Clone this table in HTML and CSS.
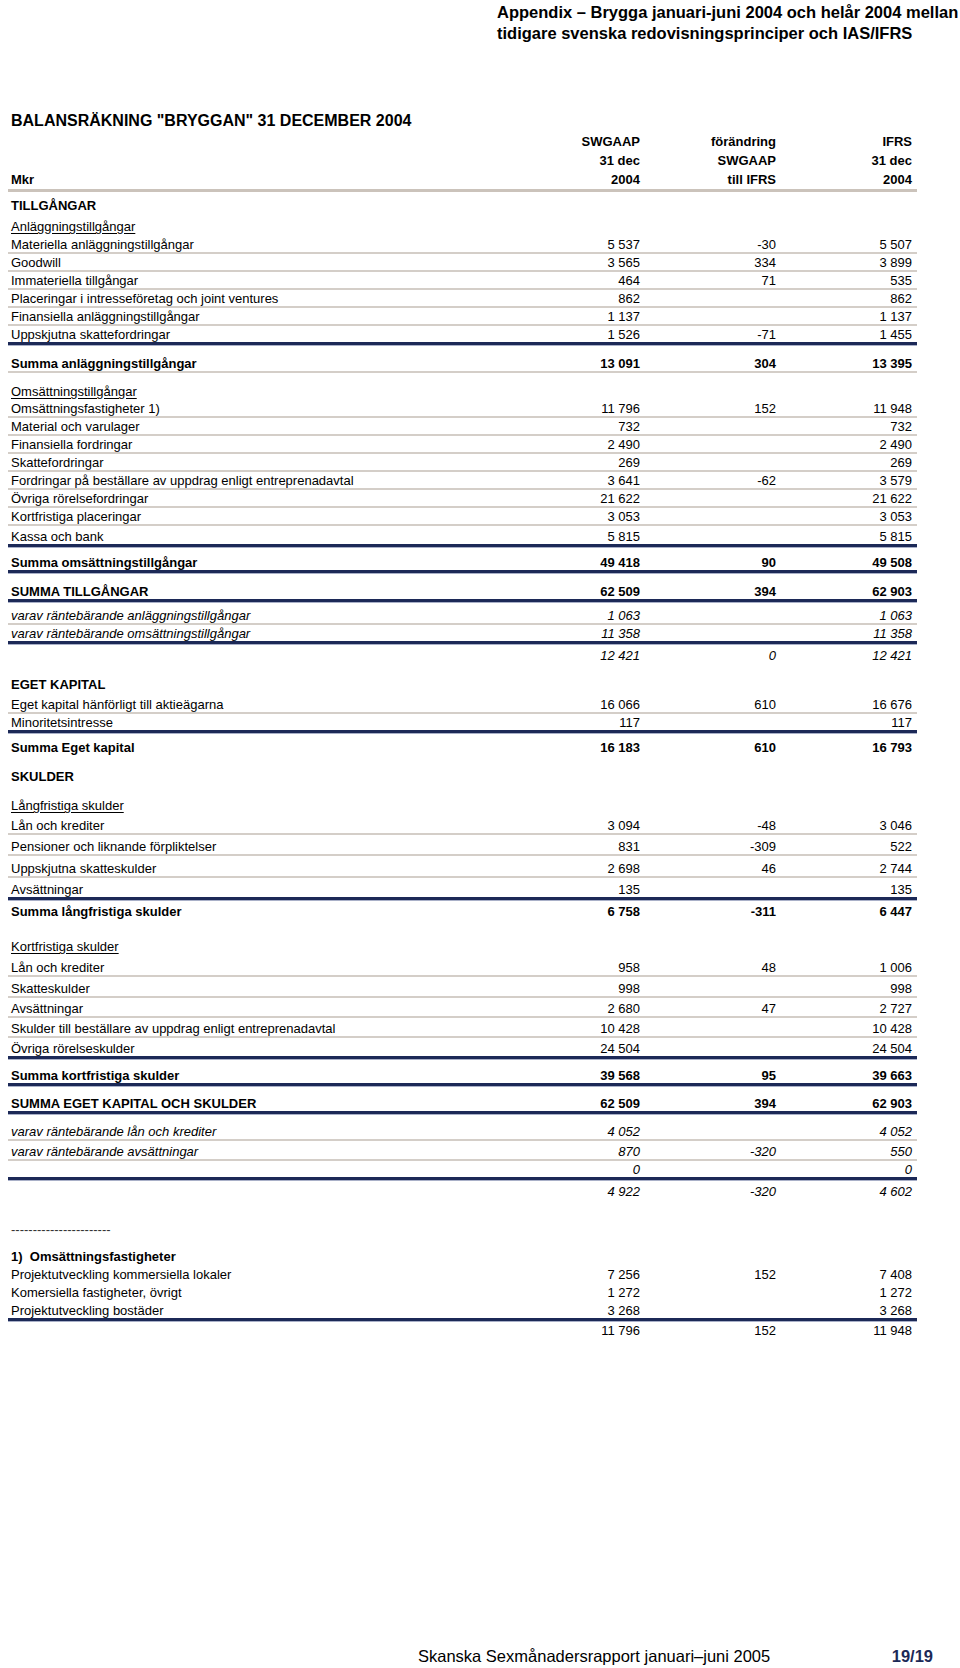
FILE: index.html
```html
<!DOCTYPE html>
<html lang="sv">
<head>
<meta charset="utf-8">
<title>Balansräkning Bryggan 31 december 2004</title>
<link rel="stylesheet" href="styles.css">
</head>
<body>
<div class="page">
  <header class="doc-head">
    <div>Appendix – Brygga januari-juni 2004 och helår 2004 mellan</div>
    <div>tidigare svenska redovisningsprinciper och IAS/IFRS</div>
  </header>

  <h1 class="sheet-title">BALANSRÄKNING "BRYGGAN" 31 DECEMBER 2004</h1>

  <section class="sheet">
    <div class="row hdr first"><span></span><span class="num">SWGAAP</span><span class="num">förändring</span><span class="num">IFRS</span></div>
    <div class="row hdr"><span></span><span class="num">31 dec</span><span class="num">SWGAAP</span><span class="num">31 dec</span></div>
    <div class="row hdr last"><span>Mkr</span><span class="num">2004</span><span class="num">till IFRS</span><span class="num">2004</span></div>

    <div class="row b pt-6"><span>TILLGÅNGAR</span></div>
    <div class="row pt-6"><span class="u">Anläggningstillgångar</span></div>
    <div class="row line pt-3"><span>Materiella anläggningstillgångar</span><span class="num">5 537</span><span class="num">-30</span><span class="num">5 507</span></div>
    <div class="row line"><span>Goodwill</span><span class="num">3 565</span><span class="num">334</span><span class="num">3 899</span></div>
    <div class="row line"><span>Immateriella tillgångar</span><span class="num">464</span><span class="num">71</span><span class="num">535</span></div>
    <div class="row line"><span>Placeringar i intresseföretag och joint ventures</span><span class="num">862</span><span class="num"></span><span class="num">862</span></div>
    <div class="row line"><span>Finansiella anläggningstillgångar</span><span class="num">1 137</span><span class="num"></span><span class="num">1 137</span></div>
    <div class="row rule"><span>Uppskjutna skattefordringar</span><span class="num">1 526</span><span class="num">-71</span><span class="num">1 455</span></div>
    <div class="row b line pt-11"><span>Summa anläggningstillgångar</span><span class="num">13 091</span><span class="num">304</span><span class="num">13 395</span></div>

    <div class="row pt-11"><span class="u">Omsättningstillgångar</span></div>
    <div class="row line pt-2"><span>Omsättningsfastigheter 1)</span><span class="num">11 796</span><span class="num">152</span><span class="num">11 948</span></div>
    <div class="row line"><span>Material och varulager</span><span class="num">732</span><span class="num"></span><span class="num">732</span></div>
    <div class="row line"><span>Finansiella fordringar</span><span class="num">2 490</span><span class="num"></span><span class="num">2 490</span></div>
    <div class="row line"><span>Skattefordringar</span><span class="num">269</span><span class="num"></span><span class="num">269</span></div>
    <div class="row line"><span>Fordringar på beställare av uppdrag enligt entreprenadavtal</span><span class="num">3 641</span><span class="num">-62</span><span class="num">3 579</span></div>
    <div class="row line"><span>Övriga rörelsefordringar</span><span class="num">21 622</span><span class="num"></span><span class="num">21 622</span></div>
    <div class="row line"><span>Kortfristiga placeringar</span><span class="num">3 053</span><span class="num"></span><span class="num">3 053</span></div>
    <div class="row rule pt-3"><span>Kassa och bank</span><span class="num">5 815</span><span class="num"></span><span class="num">5 815</span></div>
    <div class="row b rule pt-8"><span>Summa omsättningstillgångar</span><span class="num">49 418</span><span class="num">90</span><span class="num">49 508</span></div>
    <div class="row b rule pt-11"><span>SUMMA TILLGÅNGAR</span><span class="num">62 509</span><span class="num">394</span><span class="num">62 903</span></div>

    <div class="row i line pt-6"><span>varav räntebärande anläggningstillgångar</span><span class="num">1 063</span><span class="num"></span><span class="num">1 063</span></div>
    <div class="row i rule"><span>varav räntebärande omsättningstillgångar</span><span class="num">11 358</span><span class="num"></span><span class="num">11 358</span></div>
    <div class="row i pt-4"><span></span><span class="num">12 421</span><span class="num">0</span><span class="num">12 421</span></div>

    <div class="row b pt-14"><span>EGET KAPITAL</span></div>
    <div class="row line pt-5"><span>Eget kapital hänförligt till aktieägarna</span><span class="num">16 066</span><span class="num">610</span><span class="num">16 676</span></div>
    <div class="row rule"><span>Minoritetsintresse</span><span class="num">117</span><span class="num"></span><span class="num">117</span></div>
    <div class="row b pt-7"><span>Summa Eget kapital</span><span class="num">16 183</span><span class="num">610</span><span class="num">16 793</span></div>

    <div class="row b pt-14"><span>SKULDER</span></div>
    <div class="row pt-14"><span class="u">Långfristiga skulder</span></div>
    <div class="row line pt-5"><span>Lån och krediter</span><span class="num">3 094</span><span class="num">-48</span><span class="num">3 046</span></div>
    <div class="row line pt-4"><span>Pensioner och liknande förpliktelser</span><span class="num">831</span><span class="num">-309</span><span class="num">522</span></div>
    <div class="row line pt-5"><span>Uppskjutna skatteskulder</span><span class="num">2 698</span><span class="num">46</span><span class="num">2 744</span></div>
    <div class="row rule pt-4"><span>Avsättningar</span><span class="num">135</span><span class="num"></span><span class="num">135</span></div>
    <div class="row b pt-4"><span>Summa långfristiga skulder</span><span class="num">6 758</span><span class="num">-311</span><span class="num">6 447</span></div>

    <div class="row pt-20"><span class="u">Kortfristiga skulder</span></div>
    <div class="row line pt-6"><span>Lån och krediter</span><span class="num">958</span><span class="num">48</span><span class="num">1 006</span></div>
    <div class="row line pt-4"><span>Skatteskulder</span><span class="num">998</span><span class="num"></span><span class="num">998</span></div>
    <div class="row line pt-3"><span>Avsättningar</span><span class="num">2 680</span><span class="num">47</span><span class="num">2 727</span></div>
    <div class="row line pt-3"><span>Skulder till beställare av uppdrag enligt entreprenadavtal</span><span class="num">10 428</span><span class="num"></span><span class="num">10 428</span></div>
    <div class="row rule pt-3"><span>Övriga rörelseskulder</span><span class="num">24 504</span><span class="num"></span><span class="num">24 504</span></div>
    <div class="row b rule pt-9"><span>Summa kortfristiga skulder</span><span class="num">39 568</span><span class="num">95</span><span class="num">39 663</span></div>
    <div class="row b rule pt-10"><span>SUMMA EGET KAPITAL OCH SKULDER</span><span class="num">62 509</span><span class="num">394</span><span class="num">62 903</span></div>

    <div class="row i line pt-10"><span>varav räntebärande lån och krediter</span><span class="num">4 052</span><span class="num"></span><span class="num">4 052</span></div>
    <div class="row i line pt-3"><span>varav räntebärande avsättningar</span><span class="num">870</span><span class="num">-320</span><span class="num">550</span></div>
    <div class="row i rule"><span></span><span class="num">0</span><span class="num"></span><span class="num">0</span></div>
    <div class="row i pt-4"><span></span><span class="num">4 922</span><span class="num">-320</span><span class="num">4 602</span></div>

    <div class="row dashes pt-23"><span>-----------------------</span></div>
    <div class="row b pt-12"><span>1)&nbsp; Omsättningsfastigheter</span></div>
    <div class="row pt-3"><span>Projektutveckling kommersiella lokaler</span><span class="num">7 256</span><span class="num">152</span><span class="num">7 408</span></div>
    <div class="row pt-3"><span>Komersiella fastigheter, övrigt</span><span class="num">1 272</span><span class="num"></span><span class="num">1 272</span></div>
    <div class="row rule pt-3"><span>Projektutveckling bostäder</span><span class="num">3 268</span><span class="num"></span><span class="num">3 268</span></div>
    <div class="row pt-2"><span></span><span class="num">11 796</span><span class="num">152</span><span class="num">11 948</span></div>
  </section>

  <footer class="footer">
    <span>Skanska Sexmånadersrapport januari–juni 2005</span>
    <span class="page-no">19/19</span>
  </footer>
</div>
</body>
</html>
```

FILE: styles.css
```css
* { box-sizing: border-box; }

body {
  margin: 0;
  font-family: "Liberation Sans", Arial, Helvetica, sans-serif;
  color: #000;
  background: #fff;
}

.page {
  width: 960px;
  min-height: 1668px;
  display: flex;
  flex-direction: column;
}

.doc-head {
  margin: 2px 0 0 497px;
  font-size: 16.5px;
  font-weight: bold;
  line-height: 21px;
  white-space: nowrap;
}

.sheet-title {
  margin: 67px 0 0 11px;
  font-size: 16px;
  font-weight: bold;
  line-height: 20px;
}

.sheet {
  margin-left: 8px;
  width: 909px;
}

.row {
  display: grid;
  grid-template-columns: 1fr 110px 136px 136px;
  padding: 1px 5px 0 3px;
  font-size: 13px;
  line-height: 15px;
  white-space: nowrap;
}

.num { text-align: right; }

.hdr {
  padding-top: 0;
  line-height: 19px;
  font-weight: bold;
}
.hdr.first { margin-top: 1px; }
.hdr.last { border-bottom: 3px solid #cbc3bb; }

.b { font-weight: bold; }
.i { font-style: italic; }
.u { text-decoration: underline; text-underline-offset: 2px; }

.line { border-bottom: 2px solid #d4cec8; }
.rule {
  border-bottom: 3px solid #1c2957;
  box-shadow: 0 1px 0 #a9b0c8;
}

.dashes { color: #333; }

.pt-2 { padding-top: 2px; }
.pt-3 { padding-top: 3px; }
.pt-4 { padding-top: 4px; }
.pt-5 { padding-top: 5px; }
.pt-6 { padding-top: 6px; }
.pt-7 { padding-top: 7px; }
.pt-8 { padding-top: 8px; }
.pt-9 { padding-top: 9px; }
.pt-10 { padding-top: 10px; }
.pt-11 { padding-top: 11px; }
.pt-12 { padding-top: 12px; }
.pt-14 { padding-top: 14px; }
.pt-20 { padding-top: 20px; }
.pt-23 { padding-top: 23px; }

.footer {
  margin-top: auto;
  display: flex;
  padding: 0 27px 2px 418px;
  font-size: 16.5px;
  line-height: 20px;
}

.page-no {
  margin-left: auto;
  font-weight: bold;
  color: #1c2957;
}
```
